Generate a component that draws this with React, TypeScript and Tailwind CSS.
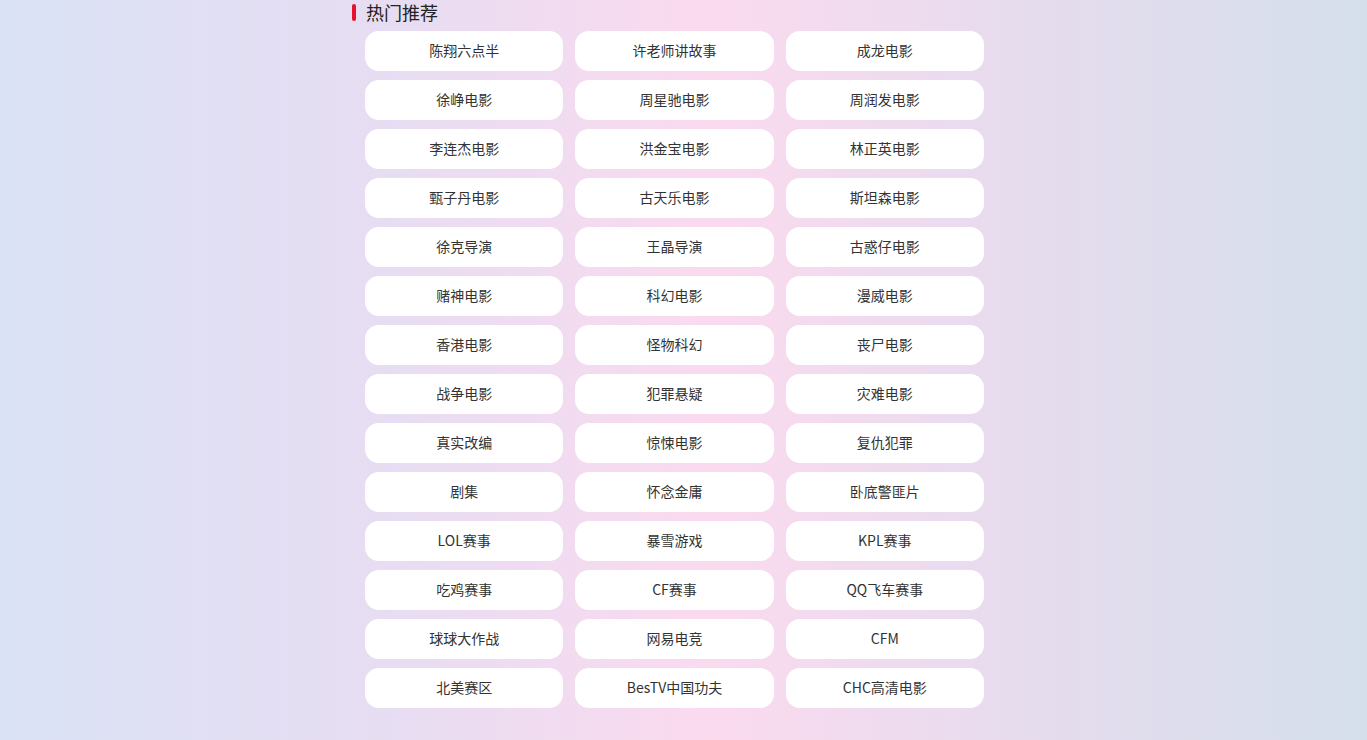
const items = [
  '陈翔六点半', '许老师讲故事', '成龙电影',
  '徐峥电影', '周星驰电影', '周润发电影',
  '李连杰电影', '洪金宝电影', '林正英电影',
  '甄子丹电影', '古天乐电影', '斯坦森电影',
  '徐克导演', '王晶导演', '古惑仔电影',
  '赌神电影', '科幻电影', '漫威电影',
  '香港电影', '怪物科幻', '丧尸电影',
  '战争电影', '犯罪悬疑', '灾难电影',
  '真实改编', '惊悚电影', '复仇犯罪',
  '剧集', '怀念金庸', '卧底警匪片',
  'LOL赛事', '暴雪游戏', 'KPL赛事',
  '吃鸡赛事', 'CF赛事', 'QQ飞车赛事',
  '球球大作战', '网易电竞', 'CFM',
  '北美赛区', 'BesTV中国功夫', 'CHC高清电影',
];

export default function App() {
  return (
    <div
      className="min-h-[740px] w-full bg-[linear-gradient(90deg,#dae2f5_0%,#e8ddf2_30%,#fbdaee_52%,#e6dcee_75%,#d5dfec_100%)] pl-[352px] pt-[3px] text-[#333]"
      style={{ fontFamily: '"Noto Sans CJK SC", "Noto Sans", sans-serif' }}
    >
      <div className="flex h-[18px] items-center gap-[10px]">
        <span className="h-[17px] w-[4px] rounded-full bg-[#e8112d]" />
        <h2 className="text-[18px] leading-[18px] font-normal text-[#222]">热门推荐</h2>
      </div>
      <div className="ml-[13px] mt-[10px] grid w-[619px] grid-cols-3 gap-x-[12px] gap-y-[9px]">
        {items.map((name) => (
          <div
            key={name}
            className="flex h-[40px] items-center justify-center rounded-[14px] bg-white pb-[2px] text-[14px] leading-none text-[#333]"
          >
            {name}
          </div>
        ))}
      </div>
    </div>
  );
}
